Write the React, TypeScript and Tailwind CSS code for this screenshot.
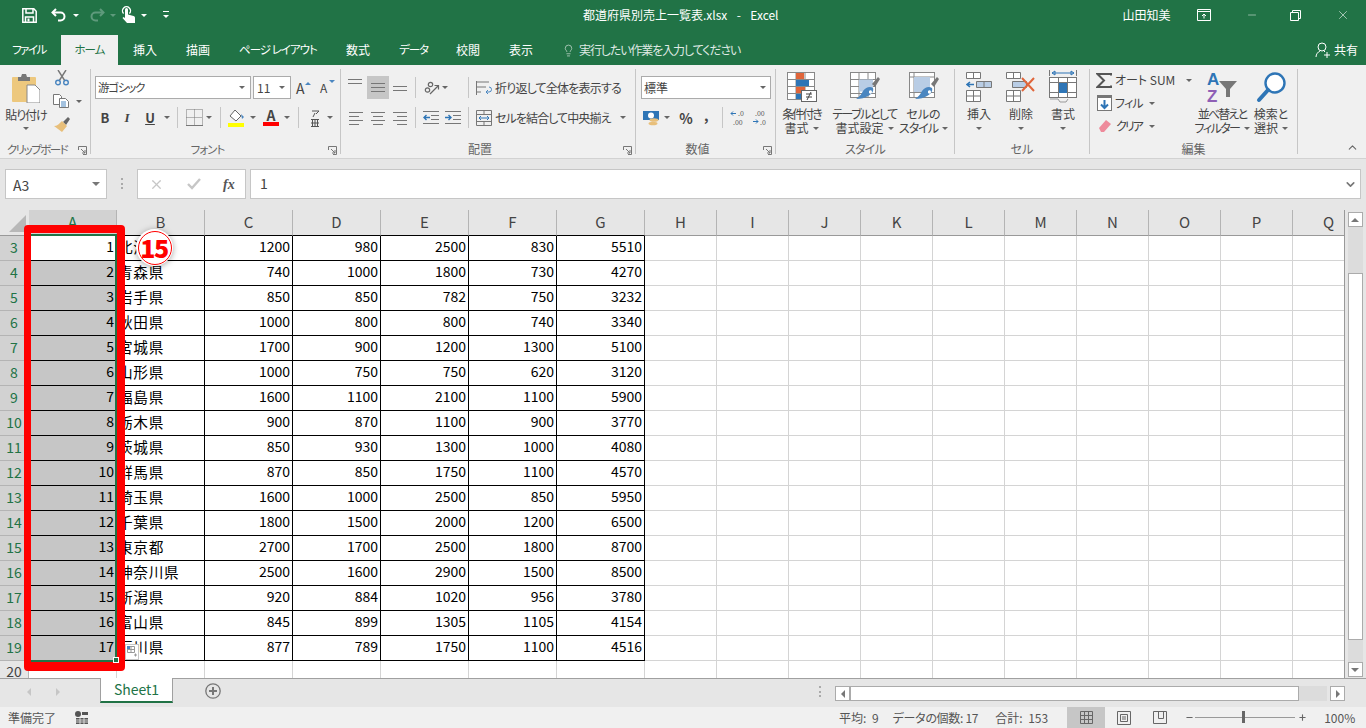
import type { ReactNode } from "react";
import { ChevronDown, ChevronUp, Lightbulb, Minus, Plus, X } from "lucide-react";

const TABS = [
  { label: "挿入", box: "ml-[15px] w-[23px]" },
  { label: "描画", box: "ml-[30px] w-[24px]" },
  { label: "ページ レイアウト", box: "ml-[29px] w-[78px] text-[11.5px] tracking-[-1px]" },
  { label: "数式", box: "ml-[29px] w-[24px]" },
  { label: "データ", box: "ml-[29px] w-[29px] text-[11.5px] tracking-[-1px]" },
  { label: "校閲", box: "ml-[28px] w-[24px]" },
  { label: "表示", box: "ml-[29px] w-[24px]" },
];

const COLUMNS = ["A", "B", "C", "D", "E", "F", "G", "H", "I", "J", "K", "L", "M", "N", "O", "P", "Q"];

const DATA: [string, number[]][] = [
  ["北海道", [1200, 980, 2500, 830, 5510]],
  ["青森県", [740, 1000, 1800, 730, 4270]],
  ["岩手県", [850, 850, 782, 750, 3232]],
  ["秋田県", [1000, 800, 800, 740, 3340]],
  ["宮城県", [1700, 900, 1200, 1300, 5100]],
  ["山形県", [1000, 750, 750, 620, 3120]],
  ["福島県", [1600, 1100, 2100, 1100, 5900]],
  ["栃木県", [900, 870, 1100, 900, 3770]],
  ["茨城県", [850, 930, 1300, 1000, 4080]],
  ["群馬県", [870, 850, 1750, 1100, 4570]],
  ["埼玉県", [1600, 1000, 2500, 850, 5950]],
  ["千葉県", [1800, 1500, 2000, 1200, 6500]],
  ["東京都", [2700, 1700, 2500, 1800, 8700]],
  ["神奈川県", [2500, 1600, 2900, 1500, 8500]],
  ["新潟県", [920, 884, 1020, 956, 3780]],
  ["富山県", [845, 899, 1305, 1105, 4154]],
  ["石川県", [877, 789, 1750, 1100, 4516]],
];

function Caret({ className = "border-t-[#666]" }: { className?: string }) {
  return <span className={"inline-block w-0 h-0 shrink-0 border-x-[3px] border-x-transparent border-t-[3px] " + className} />;
}

function Launcher() {
  return (
    <svg width="9" height="9" viewBox="0 0 9 9" fill="none" stroke="#777">
      <path d="M.5 4V.5H8.5V8.5H5" />
      <path d="M3 3l4 4M4 7h3V4" />
    </svg>
  );
}

function Group({ width, label, labelClass = "", launcher, children }: { width: string; label: string; labelClass?: string; launcher?: boolean; children: ReactNode }) {
  return (
    <div className={"flex flex-col shrink-0 h-[85px] border-r border-[#c6c6c6] " + width}>
      <div className="h-[72px] shrink-0">{children}</div>
      <div className={"relative h-[13px] flex items-start justify-center text-[#666] leading-[14px] pt-[1px] " + (launcher ? "pr-[16px]" : "")}>
        <span className={"whitespace-nowrap " + labelClass}>{label}</span>
        {launcher && (
          <span className="absolute right-[3px] top-[5px] flex">
            <Launcher />
          </span>
        )}
      </div>
    </div>
  );
}

function VDivider({ ml }: { ml: string }) {
  return <span className={"w-px h-[21px] bg-[#c6c6c6] shrink-0 " + ml} />;
}

function Lines({ x, widths }: { x: "l" | "c" | "r"; widths: number[] }) {
  return (
    <svg width="14" height="14" viewBox="0 0 14 14" stroke="#777">
      {widths.map((w, i) => {
        const start = x === "l" ? 0 : x === "c" ? (14 - w) / 2 : 14 - w;
        return <path key={i} d={`M${start} ${1.5 + i * 4}h${w}`} />;
      })}
    </svg>
  );
}

function GridMini({ size = 30 }: { size?: number }) {
  return (
    <g stroke="#888" fill="#fff">
      <rect x=".5" y=".5" width={size - 3} height={size - 3} />
      <path d={`M9 .5V${size - 2.5}M18 .5V${size - 2.5}M.5 7.5H${size - 2.5}M.5 14.5H${size - 2.5}M.5 21.5H${size - 2.5}`} fill="none" />
    </g>
  );
}

function Brush() {
  return (
    <g>
      <path d="M22 12l6-7 2 2-5 8z" fill="#777" />
      <path d="M13 19c3-4 7-5 10-3 1 3-1 6-5 8-3 2-7 3-12 3 3-2 5-4 7-8z" fill="#4a86c0" />
      <path d="M19 19c1-1 3-1 3 1s-2 2-3 1z" fill="#fff" />
    </g>
  );
}

function BigButton({ icon, lines, w, ml }: { icon: ReactNode; lines: ReactNode[]; w: string; ml: string }) {
  return (
    <div className={"flex flex-col items-center shrink-0 " + w + " " + ml}>
      <div className="h-[38px] pt-[3px] flex justify-center">{icon}</div>
      {lines.map((l, i) => (
        <div key={i} className="h-[14px] leading-[14px] flex items-center gap-[4px] whitespace-nowrap">
          {l}
        </div>
      ))}
    </div>
  );
}

function TitleBar() {
  return (
    <div className="h-[35px] shrink-0 flex items-center text-white pb-[5px]">
      <svg className="ml-[22px]" width="15" height="15" viewBox="0 0 15 15" fill="none" stroke="#fff" strokeWidth="1.5">
        <path d="M.8.8h11l2.4 2.4v11H.8z" />
        <path d="M4 1v4h7V1M3.5 14V9h8v5" />
        <path d="M5.5 10.5h2v3h-2z" fill="#fff" stroke="none" />
      </svg>
      <svg className="ml-[14px]" width="16" height="14" viewBox="0 0 16 14" fill="none" stroke="#fff" strokeWidth="2">
        <path d="M5 1L1.5 4.5 5 8" />
        <path d="M2 4.5h7.5a4 4 0 0 1 0 8H7" />
      </svg>
      <Caret className="border-t-white ml-[6px]" />
      <svg className="ml-[10px]" width="16" height="14" viewBox="0 0 16 14" fill="none" stroke="#5f9a7c" strokeWidth="2">
        <path d="M11 1l3.5 3.5L11 8" />
        <path d="M14 4.5H6.5a4 4 0 0 0 0 8H9" />
      </svg>
      <Caret className="border-t-[#5f9a7c] ml-[5px]" />
      <svg className="ml-[5px]" width="15" height="18" viewBox="0 0 15 18" fill="none">
        <path d="M2.6 7.5a4 4 0 1 1 5.8 0" stroke="#fff" strokeWidth="1.4" />
        <path d="M4 3.5a1.5 1.5 0 0 1 3 0v5l5.500 1.500c1 .4 1.500 1 1.500 2V17H6l-4.500-5 1-1 1.500 1z" fill="#fff" />
      </svg>
      <Caret className="border-t-white ml-[5px]" />
      <svg className="ml-[15px]" width="8" height="8" viewBox="0 0 8 8" fill="#fff">
        <rect x="1" y="0" width="6" height="1" />
        <path d="M1 4h6L4 7z" />
      </svg>
      <div className="ml-[413px] whitespace-pre leading-none [word-spacing:2px]">都道府県別売上一覧表.xlsx  -  Excel</div>
      <div className="ml-[344px] leading-none">山田知美</div>
      <svg className="ml-[26px]" width="14" height="12" viewBox="0 0 14 12" fill="none" stroke="#fff">
        <path d="M.5.5h13v11H.5zM.5 2.5h13M7 9.5V5M5 7l2-2 2 2" />
      </svg>
      <Minus className="ml-[35px]" size={12} strokeWidth={1} />
      <svg className="ml-[32px]" width="11" height="11" viewBox="0 0 11 11" fill="none" stroke="#fff">
        <path d="M.5 2.5h8v8h-8zM2.500 2.500v-2h8v8h-2" />
      </svg>
      <X className="ml-[35px]" size={14} strokeWidth={1} />
    </div>
  );
}

function TabRow() {
  return (
    <div className="h-[30px] shrink-0 flex items-stretch text-white">
      <div className="ml-[12px] w-[34px] flex items-center whitespace-nowrap text-[11.5px] tracking-[-1.5px] pb-[1px]">ファイル</div>
      <div className="ml-[15px] w-[57px] bg-[#f0f0f0] text-[#217346] flex items-center justify-center text-[11.5px] tracking-[-1px] pb-[1px]">ホーム</div>
      {TABS.map((t) => (
        <div key={t.label} className={"flex items-center whitespace-pre pb-[1px] " + t.box}>
          {t.label}
        </div>
      ))}
      <Lightbulb className="ml-[29px] self-center" size={13} strokeWidth={1.2} color="#dfe9e3" />
      <div className="ml-[4px] w-[160px] flex items-center text-[#dfe9e3] whitespace-nowrap tracking-[-1.1px] pb-[1px]">実行したい作業を入力してください</div>
      <svg className="ml-auto self-center" width="16" height="16" viewBox="0 0 16 16" fill="none" stroke="#fff">
        <circle cx="7" cy="5" r="4" />
        <path d="M1 15c0-3 2-5 4-6M9 9l1 1M9 13h6M12 10v6" />
      </svg>
      <div className="ml-[3px] mr-[8px] flex items-center pb-[1px]">共有</div>
    </div>
  );
}

function ClipboardGroup() {
  return (
    <Group width="w-[91px]" label="クリップボード" labelClass="text-[11.5px] tracking-[-1.5px]" launcher>
      <div className="flex">
        <div className="w-[52px] flex flex-col items-center pt-[5px]">
          <svg width="28" height="29" viewBox="0 0 28 29">
            <rect x="0" y="3" width="24" height="25" rx="1" fill="#edc87e" />
            <path d="M6 3h3l1-3h4l1 3h3v4H6z" fill="#777" />
            <path d="M15 11h8l5 5v13H15z" fill="#fff" stroke="#888" />
          </svg>
          <div className="mt-[5px] h-[14px] leading-[14px] whitespace-nowrap tracking-[-1px]">貼り付け</div>
          <div className="h-[12px] flex items-center">
            <Caret />
          </div>
        </div>
        <div className="flex flex-col pt-[1px]">
          <svg className="ml-[3px]" width="14" height="16" viewBox="0 0 14 16" fill="none">
            <path d="M3 0l7 11M11 0L4 11" stroke="#777" strokeWidth="1.4" />
            <circle cx="3" cy="12.5" r="2.3" stroke="#4a86c0" strokeWidth="1.4" />
            <circle cx="11" cy="12.5" r="2.3" stroke="#4a86c0" strokeWidth="1.4" />
          </svg>
          <div className="flex items-center mt-[8px]">
            <svg className="ml-[1px]" width="16" height="14" viewBox="0 0 16 14" fill="#fff" stroke="#777">
              <path d="M.5.5h6l2 2v8h-8z" />
              <path d="M6.5 4.5h6l3 3v6h-9z" />
              <path d="M8 8h5M8 10h5M8 12h5" stroke="#4a86c0" />
            </svg>
            <Caret className="border-t-[#666] ml-[7px]" />
          </div>
          <svg className="ml-[2px] mt-[9px]" width="16" height="15" viewBox="0 0 16 15">
            <path d="M9 5l5-5 2 2-4 6z" fill="#666" />
            <path d="M8 4l5 5-5 6-8-6c3 0 5-2 8-5z" fill="#e8bf7a" />
          </svg>
        </div>
      </div>
    </Group>
  );
}

function FontGroup() {
  return (
    <Group width="w-[250px]" label="フォント" labelClass="text-[11.5px] tracking-[-1px]" launcher>
      <div className="flex items-center pt-[7px] h-[30px]">
        <div className="ml-[4px] w-[156px] h-[23px] bg-white border border-[#ababab] flex items-center justify-between pl-[2px] pr-[5px]">
          <span className="text-[11.5px] tracking-[-1.2px]">游ゴシック</span>
          <Caret />
        </div>
        <div className="ml-[2px] w-[38px] h-[23px] bg-white border border-[#ababab] flex items-center justify-between pl-[3px] pr-[5px]">
          <span>11</span>
          <Caret />
        </div>
        <div className="ml-[5px] w-[15px] relative text-[14px] leading-none">
          A<span className="absolute top-[1px] right-0 w-0 h-0 border-x-[3px] border-x-transparent border-b-[3px] border-b-[#4a86c0]" />
        </div>
        <div className="ml-[9px] w-[15px] relative text-[12px] leading-none">
          A<span className="absolute -top-[2px] right-0 w-0 h-0 border-x-[3px] border-x-transparent border-t-[3px] border-t-[#4a86c0]" />
        </div>
      </div>
      <div className="flex items-center mt-[8px] h-[21px]">
        <span className="ml-[5px] w-[18px] text-center font-bold text-[13px]">B</span>
        <span className="ml-[4px] w-[18px] text-center italic font-bold text-[13px] font-['Liberation_Serif',serif]">I</span>
        <span className="ml-[5px] w-[18px] text-center underline font-bold text-[13px]">U</span>
        <Caret className="border-t-[#666] ml-[5px]" />
        <VDivider ml="ml-[7px]" />
        <svg className="ml-[8px]" width="17" height="17" viewBox="0 0 17 17" stroke="#777" fill="none" strokeDasharray="1 1">
          <path d="M.5 .5h16v16H.5zM.5 8.5h16M8.5 .5v16" />
          <path d="M0 16.5h17" strokeDasharray="none" />
        </svg>
        <Caret className="border-t-[#666] ml-[3px]" />
        <VDivider ml="ml-[8px]" />
        <svg className="ml-[7px]" width="17" height="18" viewBox="0 0 17 18">
          <path d="M2 7l5-6 6 6-5 5z" fill="#fff" stroke="#666" />
          <path d="M13 5l3 3-2 2z" fill="#4a86c0" />
          <rect y="14" width="16" height="4" fill="#ffff00" />
        </svg>
        <Caret className="border-t-[#666] ml-[5px]" />
        <div className="ml-[7px] w-[16px] flex flex-col items-center">
          <span className="text-[14px] leading-[13px] font-semibold">A</span>
          <span className="w-[16px] h-[4px] bg-[#ff0000]" />
        </div>
        <Caret className="border-t-[#666] ml-[5px]" />
        <VDivider ml="ml-[8px]" />
        <svg className="ml-[11px]" width="10" height="18" viewBox="0 0 10 18" fill="none" stroke="#555">
          <path d="M2 2h7L6 5M5 4L3 8" />
          <path d="M1 10.5h8M1 17.5h8M2.5 10.5v7M7.5 10.5v7M5 10.5v7M1 14h8" />
        </svg>
        <Caret className="border-t-[#666] ml-[7px]" />
      </div>
    </Group>
  );
}

function AlignmentGroup() {
  return (
    <Group width="w-[295px]" label="配置" launcher>
      <div className="flex items-center pt-[7px] h-[30px]">
        <span className="ml-[7px] flex self-start pt-[2px]">
          <Lines x="l" widths={[14, 14]} />
        </span>
        <span className="ml-[5px] w-[22px] h-[23px] bg-[#c6c6c6] flex items-center justify-center">
          <span className="flex pt-[2px]">
            <Lines x="l" widths={[14, 14, 14]} />
          </span>
        </span>
        <span className="ml-[4px] flex self-end">
          <Lines x="l" widths={[14, 14, 0]} />
        </span>
        <VDivider ml="ml-[8px]" />
        <svg className="ml-[8px]" width="16" height="16" viewBox="0 0 16 16" fill="none" stroke="#666" strokeWidth="1.2">
          <circle cx="3.500" cy="10" r="2.200" />
          <circle cx="6.500" cy="4.500" r="2.200" />
          <path d="M6 14l8-8M10.500 5.500H14.500V9.500" />
        </svg>
        <Caret className="border-t-[#666] ml-[2px]" />
        <VDivider ml="ml-[20px]" />
        <svg className="ml-[7px]" width="16" height="16" viewBox="0 0 16 16" fill="none" stroke="#777">
          <path d="M.5 1v14" />
          <path d="M1 2h12M1 7h9M1 12h4" />
          <path d="M10 12h3a2 2 0 0 0 0-5M10 12l2-2M10 12l2 2" stroke="#4a86c0" />
        </svg>
        <span className="ml-[3px] whitespace-nowrap tracking-[-0.8px]">折り返して全体を表示する</span>
      </div>
      <div className="flex items-center mt-[8px] h-[21px]">
        <span className="ml-[8px] flex pt-[1px]">
          <Lines x="l" widths={[14, 10, 14, 10]} />
        </span>
        <span className="ml-[8px] flex pt-[1px]">
          <Lines x="c" widths={[14, 10, 14, 10]} />
        </span>
        <span className="ml-[8px] flex pt-[1px]">
          <Lines x="r" widths={[14, 10, 14, 10]} />
        </span>
        <VDivider ml="ml-[8px]" />
        <svg className="ml-[7px]" width="16" height="13" viewBox="0 0 16 13" fill="none">
          <path d="M0 .5h16M8 4.500h8M8 8.500h8M0 12.500h16" stroke="#777" />
          <path d="M7 6.500H1M3.500 4L1 6.500 3.500 9" stroke="#2e75b6" strokeWidth="1.4" />
        </svg>
        <svg className="ml-[6px]" width="16" height="13" viewBox="0 0 16 13" fill="none">
          <path d="M0 .5h16M8 4.500h8M8 8.500h8M0 12.500h16" stroke="#777" />
          <path d="M0 6.500h6M3.500 4L6 6.500 3.500 9" stroke="#2e75b6" strokeWidth="1.4" />
        </svg>
        <VDivider ml="ml-[7px]" />
        <svg className="ml-[7px]" width="16" height="16" viewBox="0 0 16 16" fill="none" stroke="#777">
          <path d="M.5.5h15v15H.5zM.5 4.500h15M.5 11.500h15M8 .5v4M8 11.500v4" />
          <path d="M3 8h10M5 6L3 8l2 2M11 6l2 2-2 2" stroke="#2e75b6" />
        </svg>
        <span className="ml-[3px] w-[116px] whitespace-nowrap tracking-[-0.9px]">セルを結合して中央揃え</span>
        <Caret className="border-t-[#666] ml-[9px]" />
      </div>
    </Group>
  );
}

function NumberGroup() {
  return (
    <Group width="w-[140px]" label="数値" launcher>
      <div className="flex items-center pt-[7px] h-[30px]">
        <div className="ml-[5px] w-[130px] h-[23px] bg-white border border-[#ababab] flex items-center justify-between pl-[2px] pr-[4px]">
          <span>標準</span>
          <Caret />
        </div>
      </div>
      <div className="flex items-center mt-[8px] h-[21px]">
        <svg className="ml-[7px]" width="16" height="16" viewBox="0 0 16 16">
          <rect x="0" y="1" width="16" height="9" fill="#2e75b6" />
          <circle cx="8" cy="5.500" r="3" fill="#fff" />
          <ellipse cx="11" cy="10" rx="4.500" ry="1.800" fill="#e8bf7a" />
          <ellipse cx="10" cy="13.500" rx="4.500" ry="1.800" fill="#e8bf7a" />
        </svg>
        <Caret className="border-t-[#666] ml-[5px]" />
        <span className="ml-[9px] w-[14px] text-[14px] leading-none font-semibold text-center">%</span>
        <span className="ml-[11px] w-[4px] text-[14px] leading-none font-bold -mt-[6px]">,</span>
        <VDivider ml="ml-[14px]" />
        <svg className="ml-[7px]" width="17" height="20" viewBox="0 0 17 20" fontSize="7" fill="#555">
          <path d="M1 5.500h5M3 3.500l-2 2 2 2" fill="none" stroke="#2e75b6" />
          <text x="8" y="8">.0</text>
          <text x="3" y="17">.00</text>
        </svg>
        <svg className="ml-[5px]" width="17" height="20" viewBox="0 0 17 20" fontSize="7" fill="#555">
          <text x="3" y="8">.00</text>
          <path d="M1 13.500h5M4 11.500l2 2-2 2" fill="none" stroke="#2e75b6" />
          <text x="8" y="17">.0</text>
        </svg>
      </div>
    </Group>
  );
}

function StylesGroup() {
  return (
    <Group width="w-[179px]" label="スタイル" labelClass="tracking-[-0.8px]">
      <div className="flex">
        <BigButton
          w="w-[41px]"
          ml="ml-[5px]"
          lines={[<span className="tracking-[-2px]">条件付き</span>, <>書式<Caret /></>]}
          icon={
            <svg width="30" height="30" viewBox="0 0 30 30">
              <GridMini />
              <rect x="9" y="1" width="8" height="6" fill="#e0653a" />
              <rect x="9" y="8" width="13" height="6" fill="#2e75b6" />
              <rect x="9" y="15" width="9" height="6" fill="#e0653a" />
              <rect x="9" y="22" width="6" height="5" fill="#2e75b6" />
              <rect x="14.500" y="18.500" width="15" height="11" fill="#fff" stroke="#666" />
              <path d="M19 22h6M19 25h6M24 20l-4 8" stroke="#444" fill="none" />
            </svg>
          }
        />
        <BigButton
          w="w-[65px]"
          ml="ml-[10px]"
          lines={[<span className="tracking-[-1.5px]">テーブルとして</span>, <>書式設定<Caret /></>]}
          icon={
            <svg width="30" height="30" viewBox="0 0 30 30">
              <GridMini size={28} />
              <rect x="9" y="7.500" width="14" height="12" fill="#b9cde5" />
              <Brush />
            </svg>
          }
        />
        <BigButton
          w="w-[45px]"
          ml="ml-[4px]"
          lines={["セルの", <><span className="tracking-[-1px]">スタイル</span><Caret /></>]}
          icon={
            <svg width="30" height="30" viewBox="0 0 30 30">
              <rect x=".5" y=".5" width="25" height="25" fill="#fff" stroke="#888" />
              <path d="M5 .5v25M.5 5h25M.5 20.500h25" stroke="#888" fill="none" />
              <rect x="5" y="5" width="16" height="15" fill="#b9cde5" />
              <Brush />
            </svg>
          }
        />
      </div>
    </Group>
  );
}

function SmallCellBoxes() {
  return (
    <g stroke="#777" fill="#fff">
      <path d="M.5.5h14v6H.5zM7.500.5v6" />
      <path d="M.5 18.500h14v11H.5zM.5 24h14M7.500 18.500v11" />
    </g>
  );
}

function CellsGroup() {
  return (
    <Group width="w-[135px]" label="セル">
      <div className="flex pl-[3px]">
        <BigButton
          w="w-[42px]"
          ml=""
          lines={["挿入", <Caret />]}
          icon={
            <svg width="26" height="30" viewBox="0 0 26 30">
              <SmallCellBoxes />
              <path d="M10.500 9.500h15v6h-15zM18 9.500v6" fill="#b9cde5" stroke="#777" />
              <path d="M8 12.500H1M4 10l-3 2.500L4 15" stroke="#2e75b6" strokeWidth="1.600" fill="none" />
            </svg>
          }
        />
        <BigButton
          w="w-[42px]"
          ml=""
          lines={["削除", <Caret />]}
          icon={
            <svg width="30" height="30" viewBox="0 0 30 30">
              <SmallCellBoxes />
              <path d="M6.500 9.500h14v6h-14z" fill="#b9cde5" stroke="#777" />
              <path d="M16 6l12 13M28 6L16 19" stroke="#e0653a" strokeWidth="2" fill="none" />
            </svg>
          }
        />
        <BigButton
          w="w-[42px]"
          ml=""
          lines={["書式", <Caret />]}
          icon={
            <svg width="28" height="34" viewBox="0 0 28 34" className="-mt-[3px]">
              <path d="M3 4h22M3 4l3-2v4zM25 4l-3-2v4z" stroke="#2e75b6" fill="none" />
              <path d="M.5 1v6M27.500 1v6" stroke="#777" />
              <rect x=".5" y="8.500" width="27" height="20" fill="#fff" stroke="#777" />
              <path d="M9.500 8.500v20M18.500 8.500v20M.5 13.500h27M.5 23.500h27" stroke="#777" />
              <rect x="10" y="14" width="8" height="10" fill="#2e75b6" />
              <path d="M1 30h8l2 3h6l2-3" fill="none" stroke="#999" />
            </svg>
          }
        />
      </div>
    </Group>
  );
}

function EditingGroup() {
  return (
    <Group width="w-[208px]" label="編集">
      <div className="flex">
        <div className="ml-[6px] w-[97px] flex flex-col pt-[3px]">
          <div className="flex items-center h-[16px]">
            <svg width="16" height="15" viewBox="0 0 16 15" fill="none" stroke="#555" strokeWidth="2">
              <path d="M15 2.500V1H1.500L8 7.500 1.500 14H15v-1.500" />
            </svg>
            <span className="ml-[3px] whitespace-nowrap">オート SUM</span>
            <Caret className="border-t-[#666] ml-[11px]" />
          </div>
          <div className="flex items-center h-[16px] mt-[7px]">
            <svg className="ml-[1px]" width="15" height="16" viewBox="0 0 15 16">
              <rect x=".5" y=".5" width="14" height="15" fill="#fff" stroke="#777" />
              <rect width="15" height="3" fill="#777" />
              <path d="M7.500 5v8M4 9.500l3.500 3.500L11 9.500" stroke="#2e75b6" strokeWidth="2" fill="none" />
            </svg>
            <span className="ml-[3px] tracking-[-0.8px]">フィル</span>
            <Caret className="border-t-[#666] ml-[6px]" />
          </div>
          <div className="flex items-center h-[16px] mt-[7px]">
            <svg className="ml-[2px]" width="14" height="14" viewBox="0 0 14 14">
              <path d="M8 1l5 4-7 8H3L1 9z" fill="#ee8a9b" />
            </svg>
            <span className="ml-[4px] tracking-[-2px]">クリア</span>
            <Caret className="border-t-[#666] ml-[7px]" />
          </div>
        </div>
        <BigButton
          w="w-[58px]"
          ml=""
          lines={[<span className="tracking-[-1.8px]">並べ替えと</span>, <><span className="tracking-[-1.5px]">フィルター</span><Caret /></>]}
          icon={
            <svg width="30" height="35" viewBox="0 0 30 35" className="-mt-[1px]" fontFamily="Liberation Sans" fontWeight="700" fontSize="17">
              <text x="0" y="14" fill="#2e75b6">A</text>
              <text x="0" y="31" fill="#8e5fb5">Z</text>
              <path d="M12 10h18l-7 8v8h-4v-8z" fill="#777" />
            </svg>
          }
        />
        <BigButton
          w="w-[40px]"
          ml=""
          lines={["検索と", <>選択<Caret /></>]}
          icon={
            <svg width="30" height="32" viewBox="0 0 30 32" fill="none">
              <circle cx="19" cy="11" r="9.500" stroke="#2e75b6" strokeWidth="2.400" fill="#fff" />
              <path d="M12 18L3 28" stroke="#2e75b6" strokeWidth="4" strokeLinecap="round" />
            </svg>
          }
        />
      </div>
    </Group>
  );
}

function Ribbon() {
  return (
    <div className="h-[94px] shrink-0 bg-[#f0f0f0] border-b border-[#d2d2d2] text-[#444] flex pt-[4px]">
      <ClipboardGroup />
      <FontGroup />
      <AlignmentGroup />
      <NumberGroup />
      <StylesGroup />
      <CellsGroup />
      <EditingGroup />
      <div className="flex-1 flex items-end justify-end pr-[7px] pb-[4px]">
        <ChevronUp size={13} color="#666" strokeWidth={2} />
      </div>
    </div>
  );
}

function FormulaBar() {
  return (
    <div className="h-[51px] shrink-0 bg-[#e6e6e6] flex items-start pt-[10px] text-[#444]">
      <div className="ml-[5px] w-[102px] h-[30px] bg-white border border-[#c6c6c6] flex items-center justify-between pl-[7px] pr-[6px] text-[14px]">
        <span className="pt-[2px]">A3</span>
        <span className="w-0 h-0 border-x-[4px] border-x-transparent border-t-[4px] border-t-[#777]" />
      </div>
      <div className="ml-[14px] w-[2px] h-[11px] mt-[9px] border-l-2 border-dotted border-[#aaa]" />
      <div className="ml-[14px] w-[109px] h-[30px] bg-white border border-[#c6c6c6] flex items-center">
        <X className="ml-[11px]" size={15} color="#c6c6c6" strokeWidth={2} />
        <svg className="ml-[23px]" width="14" height="12" viewBox="0 0 14 12" fill="none" stroke="#c6c6c6" strokeWidth="2.400">
          <path d="M1 6l4 4 8-9" />
        </svg>
        <span className="ml-[22px] italic font-bold text-[14px] font-['Liberation_Serif',serif] text-[#555]">fx</span>
      </div>
      <div className="ml-[4px] w-[1111px] h-[30px] bg-white border border-[#c6c6c6] flex items-center justify-between pl-[9px] pr-[3px] text-[14px]">
        <span className="pb-[1px]">1</span>
        <ChevronDown size={13} color="#777" strokeWidth={3} />
      </div>
    </div>
  );
}

function Grid() {
  const cell = "h-[25px] flex items-center border-r border-b";
  return (
    <div className="relative w-[1346px] overflow-hidden border-r border-[#999] bg-white">
      <div className="grid grid-cols-[29px_repeat(7,88px)_repeat(10,72px)] grid-rows-[26px_repeat(17,25px)_17px] text-black">
        {/* column header row */}
        <div className="bg-[#e6e6e6] relative border-b border-[#999]">
          <span className="absolute right-[3px] bottom-[3px] w-0 h-0 border-l-[17px] border-l-transparent border-b-[17px] border-b-[#b8b8b8]" />
        </div>
        {COLUMNS.map((c, i) => (
          <div
            key={c}
            className={
              "flex items-center justify-center text-[15px] text-[#444] border-r border-r-[#b4b4b4] border-b " +
              (i === 0 ? "bg-[#d2d2d2] text-[#217346] " : "bg-[#e6e6e6] ") +
              (i < 7 ? "border-b-black" : "border-b-[#999]")
            }
          >
            {c}
          </div>
        ))}

        {DATA.map(([pref, nums], r) => (
          <div key={pref} className="contents">
            <div className="bg-[#d2d2d2] text-[#217346] text-[14px] h-[25px] flex items-center justify-center border-r border-b border-[#b4b4b4] pb-[2px]">
              {r + 3}
            </div>
            <div className={cell + " border-black justify-end pr-[2px] pb-[3px] text-[14px] " + (r === 0 ? "bg-white" : "bg-[#c6c6c6]")}>{r + 1}</div>
            <div className={cell + " border-black pl-[1px] pb-[2px] text-[14.67px] tracking-[0.7px] whitespace-nowrap"}>{pref}</div>
            {nums.map((n, i) => (
              <div key={i} className={cell + " border-black justify-end pr-[2px] pb-[3px] text-[14px]"}>
                {n}
              </div>
            ))}
            {COLUMNS.slice(7).map((c) => (
              <div key={c} className={cell + " border-[#d4d4d4]"} />
            ))}
          </div>
        ))}

        {/* row 20, cut off by the sheet tabs */}
        <div className="bg-[#e6e6e6] text-[#444] text-[14px] flex items-start justify-center border-r border-[#b4b4b4] overflow-hidden">20</div>
        {COLUMNS.map((c) => (
          <div key={c} className="border-r border-[#d4d4d4]" />
        ))}
      </div>

      {/* selection frame, red annotation, badge and paste options lie over the sheet */}
      <div className="absolute left-[29px] top-[24px] w-[88px] h-[428px] border-2 border-[#217346]" />
      <div className="absolute left-[113px] top-[447px] w-[6px] h-[6px] bg-[#217346] border border-white z-20" />
      <div className="absolute left-[24px] top-[15px] w-[101px] h-[446px] rounded-[4px] border-[#ff0000] border-t-[8px] border-b-[9px] border-l-[7px] border-r-[8px] z-10" />
      <div className="absolute left-[125px] top-[434px] w-[14px] h-[16px] bg-white border border-[#c6c6c6] flex items-center justify-center">
        <svg width="10" height="12" viewBox="0 0 10 12" fill="none" stroke="#999">
          <path d="M.5 .5h7v6h-7zM4 .5v6M.5 3.500h7" />
          <rect x="0" y="0" width="3" height="3" fill="#4a86c0" stroke="none" />
          <path d="M7 9h3M8.500 7.500v3" />
        </svg>
      </div>
      <div className="absolute left-[136px] top-[19px] w-[37px] h-[37px] rounded-full bg-white shadow-[0_1px_6px_rgba(0,0,0,0.35)] flex items-center justify-center z-10">
        <div className="w-[34px] h-[34px] rounded-full border-[1.5px] border-[#ff0000] flex items-center justify-center text-[#ff0000] text-[25px] font-black leading-none tracking-[-1.5px] pr-[1px]">15</div>
      </div>
    </div>
  );
}

function ScrollButton({ children, className = "" }: { children: ReactNode; className?: string }) {
  return <div className={"bg-white border border-[#ababab] flex items-center justify-center shrink-0 " + className}>{children}</div>;
}

function VScroll() {
  return (
    <div className="w-[20px] bg-[#e6e6e6] flex flex-col items-center pt-[2px] pb-[1px] ml-[1px] pr-[2px]">
      <ScrollButton className="w-[15px] h-[15px]">
        <span className="w-0 h-0 border-x-[4px] border-x-transparent border-b-[4px] border-b-[#777]" />
      </ScrollButton>
      <div className="flex-1 w-[15px] bg-[#dcdcdc] pt-[46px] pb-[22px] flex">
        <div className="flex-1 bg-white border border-[#ababab]" />
      </div>
      <ScrollButton className="w-[15px] h-[15px]">
        <span className="w-0 h-0 border-x-[4px] border-x-transparent border-t-[4px] border-t-[#777]" />
      </ScrollButton>
    </div>
  );
}

function SheetTabs() {
  return (
    <div className="h-[29px] shrink-0 bg-[#e6e6e6] flex items-start border-t border-[#a0a0a0]">
      <span className="ml-[27px] mt-[9px] w-0 h-0 border-y-[4px] border-y-transparent border-r-[4px] border-r-[#c6c6c6]" />
      <span className="ml-[25px] mt-[9px] w-0 h-0 border-y-[4px] border-y-transparent border-l-[4px] border-l-[#c6c6c6]" />
      <div className="ml-[40px] -mt-px w-[73px] h-[25px] bg-white border-x border-[#a0a0a0] border-b-2 border-b-[#217346] text-[#217346] text-[14px] flex items-center justify-center">
        Sheet1
      </div>
      <svg className="ml-[32px] mt-[4px]" width="16" height="16" viewBox="0 0 16 16" fill="none" stroke="#777">
        <circle cx="8" cy="8" r="7.200" strokeWidth="1.300" />
        <path d="M8 4v8M4 8h8" strokeWidth="2" />
      </svg>
      <div className="ml-[598px] mt-[7px] w-[2px] h-[11px] border-l-2 border-dotted border-[#aaa]" />
      <div className="ml-[14px] mt-[7px] w-[510px] h-[15px] flex">
        <ScrollButton className="w-[15px] h-[15px]">
          <span className="w-0 h-0 border-y-[4px] border-y-transparent border-r-[4px] border-r-[#777]" />
        </ScrollButton>
        <div className="flex-1 bg-[#dcdcdc] flex">
          <div className="w-[449px] bg-white border border-[#ababab]" />
        </div>
        <span className="w-[3px]" />
        <ScrollButton className="w-[15px] h-[15px]">
          <span className="w-0 h-0 border-y-[4px] border-y-transparent border-l-[4px] border-l-[#777]" />
        </ScrollButton>
      </div>
    </div>
  );
}

function StatusBar() {
  return (
    <div className="h-[21px] shrink-0 bg-[#f0f0f0] text-[#555] flex items-center">
      <span className="ml-[8px]">準備完了</span>
      <svg className="ml-[19px]" width="13" height="13" viewBox="0 0 13 13" fill="#555">
        <circle cx="3" cy="3" r="3" />
        <path d="M7 1h6v3H7zM1 7h12v6H1z" />
        <path d="M1 9h12M1 11h12M5 7v6M9 7v6" stroke="#f0f0f0" strokeWidth=".8" />
      </svg>
      <span className="ml-[751px] whitespace-pre [word-spacing:3px]">平均: 9</span>
      <span className="ml-[14px] whitespace-pre tracking-[-0.3px]">データの個数: 17</span>
      <span className="ml-[17px] whitespace-pre [word-spacing:3px]">合計: 153</span>
      <div className="ml-[19px] w-[38px] h-[21px] bg-[#c6c6c6] flex items-center justify-center">
        <svg width="13" height="13" viewBox="0 0 13 13" fill="none" stroke="#666">
          <path d="M.5.5h12v12H.5zM4.500.5v12M8.500.5v12M.5 4.500h12M.5 8.500h12" />
        </svg>
      </div>
      <svg className="ml-[12px]" width="14" height="14" viewBox="0 0 14 14" fill="none" stroke="#666">
        <path d="M.5.5h13v13H.5zM3.500 3.500h7v7h-7zM5 6h4M5 8h4" />
      </svg>
      <svg className="ml-[22px]" width="14" height="13" viewBox="0 0 14 13" fill="none" stroke="#666">
        <path d="M.5.5h13v12H.5zM5.500.5v7h5V.5" />
      </svg>
      <Minus className="ml-[18px]" size={9} strokeWidth={3} color="#666" />
      <div className="ml-[1px] w-[100px] h-px bg-[#999] relative">
        <span className="absolute left-[47px] -top-[6px] w-[3px] h-[12px] bg-[#666]" />
      </div>
      <Plus className="ml-[3px]" size={9} strokeWidth={3} color="#666" />
      <span className="ml-[17px]">100%</span>
    </div>
  );
}

export default function App() {
  return (
    <div className="relative w-[1366px] h-[728px] overflow-hidden bg-[#217346] text-[12px] font-['Noto_Sans_CJK_JP','Noto_Sans',sans-serif] [font-feature-settings:'palt'] flex flex-col">
      <TitleBar />
      <TabRow />
      <Ribbon />
      <FormulaBar />
      <div className="h-[468px] shrink-0 flex bg-[#e6e6e6]">
        <Grid />
        <VScroll />
      </div>
      <SheetTabs />
      <StatusBar />
    </div>
  );
}
